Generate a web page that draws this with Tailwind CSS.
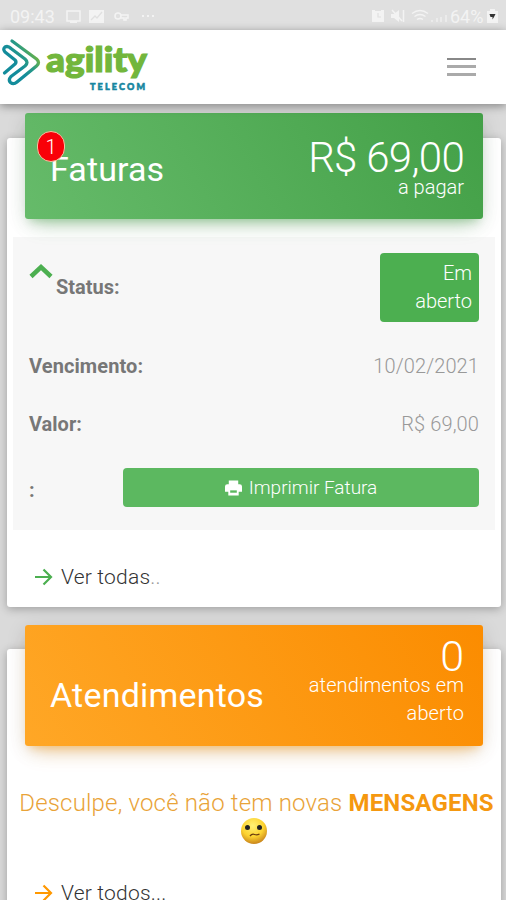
<!DOCTYPE html>
<html lang="pt-BR">
<head>
  <meta charset="UTF-8">
  <meta name="viewport" content="width=device-width, initial-scale=1.0">
  <title>Agility Telecom</title>
  <script src="https://cdn.jsdelivr.net/npm/@tailwindcss/browser@4"></script> <!-- Tailwind CSS -->
</head>
<body class="h-[900px] overflow-hidden bg-[#dadada] font-['Roboto',sans-serif] font-light text-[#3c4858]">

  <!-- Status bar -->
  <div class="flex h-[30px] items-center justify-between bg-[#e0e0e0] pt-[2px] pl-[10px] pr-[8px] text-[18px] font-normal text-[#f3f3f3]">
    <div class="flex items-center">
      <span class="w-[46px]">09:43</span>
      <svg class="ml-[10px]" width="15" height="13" viewBox="0 0 15 13" fill="none" stroke="currentColor" stroke-width="1.5"><path d="M1 1h13v10H1zM4 12.2h7"/></svg>
      <svg class="ml-[8px]" width="15" height="13" viewBox="0 0 15 13"><path fill="currentColor" d="M0 0h15v13H0z"/><path d="M2 10l4-4 2 2 5-6" fill="none" stroke="#e0e0e0" stroke-width="1.3"/></svg>
      <svg class="ml-[10px]" width="15" height="11" viewBox="0 0 15 11" fill="none" stroke="currentColor" stroke-width="1.6"><circle cx="4" cy="5" r="3"/><path d="M7 4h7v3h-2v2h-2V7H7"/></svg>
      <span class="ml-[13px] flex gap-[3px]"><i class="size-[2px] bg-current"></i><i class="size-[2px] bg-current"></i><i class="size-[2px] bg-current"></i></span>
    </div>
    <div class="flex items-center">
      <svg width="14" height="14" viewBox="0 0 14 14"><path fill="currentColor" d="M1 1h3v1h6V1h3v12H1z"/><path d="M7 4v4h3" fill="none" stroke="#e0e0e0" stroke-width="1.2"/></svg>
      <svg class="ml-[6px]" width="14" height="14" viewBox="0 0 14 14"><path fill="currentColor" d="M0 5h3l5-4v12L3 9H0z"/><path d="M1 1l10 11M12.500 1v12" fill="none" stroke="currentColor" stroke-width="1.5"/></svg>
      <svg class="ml-[6px]" width="18" height="14" viewBox="0 0 18 14" fill="none" stroke="currentColor" stroke-width="1.4"><path d="M1 4.500q8-6 16 0M3.500 7.500q5.500-4 11 0M6 10.500q3-2 6 0"/></svg>
      <svg class="ml-[1px]" width="18" height="14" viewBox="0 0 18 14" fill="currentColor" opacity=".6"><path d="M1 11h2v2H1zM6 9h2v4H6zM10 8h2v5h-2zM15 6h2v7h-2z"/></svg>
      <span class="ml-[2px] w-[34px]">64%</span>
      <svg class="ml-[3px]" width="11" height="14" viewBox="0 0 11 14"><path fill="currentColor" d="M3 0h5v2h3v12H0V2h3z"/><path fill="#333" d="M2.500 5h6L7 8 5.500 10.500V8h-2z"/></svg>
    </div>
  </div>

  <!-- Navbar -->
  <header class="relative z-10 flex h-[74px] items-center justify-between bg-white pr-[30px] shadow-[0_2px_9px_rgba(0,0,0,0.4)]">
    <svg width="150" height="74" viewBox="0 0 150 74">
      <defs>
        <linearGradient id="logoArrow" gradientUnits="userSpaceOnUse" x1="8" y1="38" x2="34" y2="20">
          <stop offset="0.3" stop-color="#138c9b"/>
          <stop offset="0.65" stop-color="#2a9a85"/>
          <stop offset="1" stop-color="#74b63e"/>
        </linearGradient>
      </defs>
      <path d="M4.500 43L15 34Q17 32 15 30L5 22Q2.500 19 5 17Q8 15.500 11 18.500L25 29Q29 32.500 25 36L11 46.500Q8 50 10.500 52.500Q13.500 55 17 52L36.500 36Q40.500 32.500 36.500 29L12 11" fill="none" stroke="url(#logoArrow)" stroke-width="3.300" stroke-linejoin="round" stroke-linecap="round"/>
      <text x="46" y="42" font-family="Lato" font-weight="900" font-size="34" fill="#72b63c" stroke="#72b63c" stroke-width="1.2" textLength="101" lengthAdjust="spacingAndGlyphs">agility</text>
      <text x="90" y="60" font-family="Lato" font-weight="900" font-size="9" fill="#1686a0" stroke="#1686a0" stroke-width=".6" textLength="55">TELECOM</text>
    </svg>
    <button class="flex flex-col gap-[5px]" aria-label="Menu">
      <span class="h-[2px] w-[29px] bg-[#888]"></span>
      <span class="h-[3px] w-[29px] bg-[#aaa]"></span>
      <span class="h-[3px] w-[29px] bg-[#aaa]"></span>
    </button>
  </header>

  <main class="pl-[7px] pr-[5px]">
    <!-- Faturas -->
    <section class="mt-[34px] h-[469px] rounded-[3px] bg-white px-[6px] shadow-[0_2px_10px_rgba(0,0,0,0.28)]">
      <div class="flow-root">
        <div class="relative -mt-[25px] ml-[12px] mr-[12px] flex h-[106px] justify-between rounded-[3px] bg-linear-[60deg,#66bb6a,#43a047] pl-[25px] pr-[19px] text-white shadow-[0_12px_20px_-10px_rgba(76,175,80,0.4),0_4px_20px_rgba(0,0,0,0.12),0_7px_8px_-5px_rgba(76,175,80,0.3)]">
          <h4 class="pt-[38px] text-[30px] leading-[36px] font-normal tracking-[0.1px]"><span class="text-[34px]">Faturas</span></h4>
          <span class="absolute top-[18px] left-[12px] flex h-[31px] w-[28px] items-center justify-center rounded-full border border-[#f5c3a0] bg-[#f90008] text-[20px] font-light">1</span>
          <div class="pt-[22px] text-right">
            <p class="text-[42px] leading-[46px] tracking-[-0.7px]">R$ 69,00</p>
            <p class="-mt-[8px] text-[20px] leading-[28px]">a pagar</p>
          </div>
        </div>
      </div>

      <div class="mt-[18px] h-[293px] bg-[#f7f7f7] px-[16px] pt-[16px] text-[20px] text-[#999]">
        <div class="flex h-[70px] justify-between">
          <div class="flex">
            <svg class="mt-[10px]" width="24" height="16" viewBox="0 0 24 16" fill="none" stroke="#4caf50" stroke-width="4.500"><path d="M2 13.500L12 4l10 9.500"/></svg>
            <strong class="ml-[3px] pt-[19px] leading-[30px] font-bold text-[#777]">Status:</strong>
          </div>
          <div class="h-[69px] w-[99px] rounded-[4px] bg-[#4caf50] pt-[6px] pr-[7px] pl-[30px] text-right leading-[28px] text-white">Em aberto</div>
        </div>
        <div class="mt-[28px] flex justify-between leading-[30px]">
          <strong class="font-bold tracking-[0.1px] text-[#777]">Vencimento:</strong>
          <span class="tracking-[0.1px]">10/02/2021</span>
        </div>
        <div class="mt-[28px] flex justify-between leading-[30px]">
          <strong class="font-bold text-[#777]">Valor:</strong>
          <span class="tracking-[0.1px]">R$ 69,00</span>
        </div>
        <div class="mt-[29px] flex justify-between">
          <strong class="pt-[7px] leading-[30px] font-bold text-[#777]">:</strong>
          <button class="flex h-[39px] w-[356px] items-center justify-center rounded-[4px] bg-[#5cb860] text-white">
            <svg class="mr-[7px]" width="17" height="16" viewBox="0 0 18 16"><path fill="currentColor" d="M4 0h10v4h1.500Q18 4 18 6.500V12h-3.500v4h-11v-4H0V6.500Q0 4 2.500 4H4z"/><path fill="#5cb860" d="M5.500 10.500h7v2.500h-7z"/></svg>
            <span class="pt-px text-[19px]">Imprimir Fatura</span>
          </button>
        </div>
      </div>

      <a class="mt-[33px] ml-[22px] flex items-center text-[21px] leading-[28px] tracking-[0.2px] text-[#333]">
        <svg width="18" height="18" viewBox="0 0 18 18" fill="none" stroke="#4caf50" stroke-width="2.200"><path d="M0 9h16M8.500 1.500L16 9l-7.500 7.500"/></svg>
        <span class="ml-[8px]">Ver todas<span class="text-[#999]">..</span></span>
      </a>
    </section>

    <!-- Atendimentos -->
    <section class="mt-[42px] h-[320px] rounded-[3px] bg-white px-[6px] shadow-[0_2px_10px_rgba(0,0,0,0.28)]">
      <div class="flow-root">
        <div class="relative -mt-[24px] ml-[12px] mr-[12px] flex h-[121px] justify-between rounded-[3px] bg-linear-[60deg,#ffa726,#fb8c00] pl-[25px] pr-[19px] text-white shadow-[0_12px_20px_-10px_rgba(255,152,0,0.4),0_4px_20px_rgba(0,0,0,0.12),0_7px_8px_-5px_rgba(255,152,0,0.3)]">
          <h4 class="pt-[52px] text-[34px] leading-[36px] font-normal tracking-[0.2px]">Atendimentos</h4>
          <div class="w-[170px] pt-[8px] text-right">
            <p class="text-[43px] leading-[46px]">0</p>
            <p class="-mt-[8px] text-[20px] leading-[28px] tracking-[0.1px]">atendimentos em aberto</p>
          </div>
        </div>
      </div>

      <div class="-mx-[6px] mt-[43px] text-center text-[24px] leading-[28px] tracking-[0.17px] whitespace-nowrap text-[#e9a338]">
        <p class="pl-[5px]">Desculpe, você não tem novas <b class="font-bold text-[#f5980f]">MENSAGENS</b></p>
        <svg class="mx-auto" width="28" height="28" viewBox="0 0 28 28">
          <defs>
            <radialGradient id="face" cx=".45" cy=".3" r=".7">
              <stop offset="0" stop-color="#fff176"/>
              <stop offset=".6" stop-color="#fcd22f"/>
              <stop offset="1" stop-color="#c9851c"/>
            </radialGradient>
          </defs>
          <circle cx="14" cy="14" r="13" fill="url(#face)"/>
          <circle cx="7.500" cy="10.500" r="2.500" fill="#222"/><circle cx="19.500" cy="10.500" r="2.500" fill="#222"/>
          <path d="M10 19q2-2.500 4.500-1.500t5-.5" fill="none" stroke="#6b3d10" stroke-width="1.300"/>
        </svg>
      </div>

      <a class="mt-[34px] ml-[22px] flex items-center text-[21px] leading-[28px] tracking-[0.2px] text-[#333]">
        <svg width="18" height="18" viewBox="0 0 18 18" fill="none" stroke="#ff9800" stroke-width="2.200"><path d="M0 9h16M8.500 1.500L16 9l-7.500 7.500"/></svg>
        <span class="ml-[8px]">Ver todos...</span>
      </a>
    </section>
  </main>
</body>
</html>
